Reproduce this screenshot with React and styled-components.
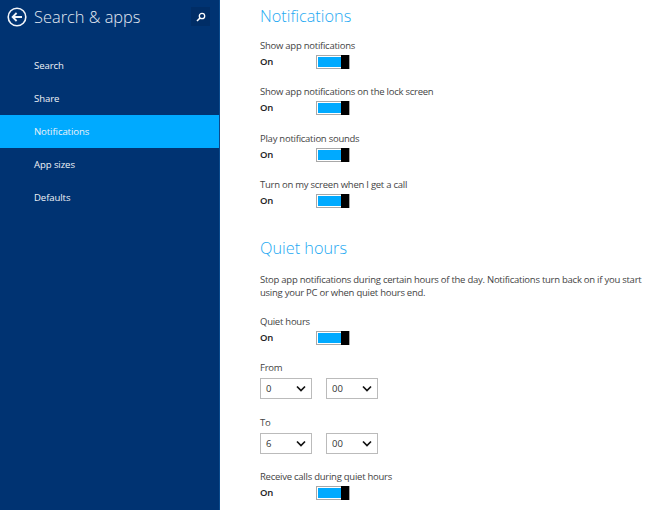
import React from 'react';
import styled, { createGlobalStyle } from 'styled-components';

const Global = createGlobalStyle`
  html, body {
    margin: 0;
    padding: 0;
    background: #fff;
    overflow: hidden;
  }
`

const Page = styled.div`
  display: flex;
  width: 660px;
  height: 510px;
  overflow: hidden;
  font-family: "Open Sans", "Noto Sans", sans-serif;
`

const Sidebar = styled.nav`
  width: 219px;
  height: 510px;
  background: #003372;
  border-right: 1px solid #0a4a8c;
  flex-shrink: 0;
`

const SideHeader = styled.div`
  display: flex;
  align-items: center;
  height: 33px;
  padding: 0 9px 0 7px;
  margin-bottom: 16px;
`

const BackIcon = styled.svg`
  width: 20px;
  height: 20px;
  margin-right: 7px;
  flex-shrink: 0;
`

const SideTitle = styled.h1`
  flex: 1;
  margin: 0;
  font-size: 16.4px;
  font-weight: 300;
  color: #e3e9f1;
  white-space: nowrap;
`

const SearchBox = styled.div`
  display: flex;
  align-items: center;
  justify-content: center;
  width: 19px;
  height: 19px;
  background: #002d66;
`

const SideItem = styled.div`
  display: flex;
  align-items: center;
  height: 33px;
  padding-left: 34px;
  font-size: 9.6px;
  letter-spacing: -0.1px;
  color: #eef2f7;
  background: ${p => (p.$active ? '#00aaff' : 'transparent')};
`

const Main = styled.main`
  flex: 1;
  padding: 4px 0 0 40px;
`

const Title = styled.h2`
  margin: ${p => p.$top || 0}px 0 0;
  height: 24px;
  line-height: 24px;
  font-size: 16.3px;
  font-weight: 300;
  color: #1ea9f2;
`

const Setting = styled.div`
  margin-top: ${p => p.$top}px;
`

const Label = styled.div`
  height: 16px;
  line-height: 15px;
  font-size: 9.5px;
  letter-spacing: -0.25px;
  color: #444;
  white-space: nowrap;
`

const ToggleRow = styled.div`
  display: flex;
  align-items: center;
  height: 16px;
`

const State = styled.span`
  width: 56px;
  padding-bottom: 1px;
  font-size: 9.5px;
  letter-spacing: -0.2px;
  font-weight: 600;
  color: #222;
`

const Toggle = styled.div`
  display: flex;
  width: 34px;
  height: 14px;
  box-sizing: border-box;
  border: 1px solid #a8a8a8;
  padding: 1px 0 1px 1px;
  background: #fff;
`

const ToggleFill = styled.div`
  flex: 1;
  background: #00aaff;
`

const ToggleThumb = styled.div`
  width: 8px;
  margin: -2px 0;
  background: #000;
`

const Paragraph = styled.p`
  margin: 13px 0 0;
  width: 392px;
  font-size: 9.5px;
  letter-spacing: -0.25px;
  line-height: 13px;
  color: #444;
`

const SelectRow = styled.div`
  display: flex;
  gap: 14px;
  margin-top: 2px;
`

const Select = styled.div`
  display: flex;
  align-items: center;
  justify-content: space-between;
  width: 52px;
  height: 21px;
  box-sizing: border-box;
  padding: 0 5px 0 5px;
  border: 1px solid #bbb;
  font-size: 9.5px;
  color: #333;
`

const Chevron = styled.svg`
  width: 10px;
  height: 7px;
`

function Switch({ label, top }) {
  return (
    <Setting $top={top}>
      <Label>{label}</Label>
      <ToggleRow>
        <State>On</State>
        <Toggle>
          <ToggleFill />
          <ToggleThumb />
        </Toggle>
      </ToggleRow>
    </Setting>
  )
}

function Dropdown({ value }) {
  return (
    <Select>
      {value}
      <Chevron viewBox="0 0 10 7">
        <path d="M1 1.5l4 4 4-4" fill="none" stroke="#111" strokeWidth="1.7" />
      </Chevron>
    </Select>
  )
}

function TimeRow({ label, top, hour }) {
  return (
    <Setting $top={top}>
      <Label>{label}</Label>
      <SelectRow>
        <Dropdown value={hour} />
        <Dropdown value="00" />
      </SelectRow>
    </Setting>
  )
}

function App() {
  const items = ['Search', 'Share', 'Notifications', 'App sizes', 'Defaults']

  return (
    <Page>
      <Global />
      <Sidebar>
        <SideHeader>
          <BackIcon viewBox="0 0 20 20">
            <circle cx="10" cy="10" r="8.8" fill="none" stroke="#f2f5f9" strokeWidth="1.6" />
            <path d="M15 10H6M9.6 6L5.6 10l4 4" fill="none" stroke="#f2f5f9" strokeWidth="1.8" />
          </BackIcon>
          <SideTitle>Search &amp; apps</SideTitle>
          <SearchBox>
            <svg width="10" height="10" viewBox="0 0 10 10">
              <circle cx="6" cy="4" r="2.7" fill="none" stroke="#fff" strokeWidth="1.3" />
              <path d="M4 6L1 9" stroke="#fff" strokeWidth="1.6" />
            </svg>
          </SearchBox>
        </SideHeader>
        {items.map(item => (
          <SideItem key={item} $active={item === 'Notifications'}>{item}</SideItem>
        ))}
      </Sidebar>
      <Main>
        <Title>Notifications</Title>
        <Switch label="Show app notifications" top={10} />
        <Switch label="Show app notifications on the lock screen" top={14.33} />
        <Switch label="Play notification sounds" top={14.33} />
        <Switch label="Turn on my screen when I get a call" top={14.33} />
        <Title $top={27}>Quiet hours</Title>
        <Paragraph>
          Stop app notifications during certain hours of the day. Notifications turn back on if you start using your PC or when quiet hours end.
        </Paragraph>
        <Switch label="Quiet hours" top={15} />
        <TimeRow label="From" top={14} hour="0" />
        <TimeRow label="To" top={16} hour="6" />
        <Switch label="Receive calls during quiet hours" top={15} />
      </Main>
    </Page>
  )
}

export default App
